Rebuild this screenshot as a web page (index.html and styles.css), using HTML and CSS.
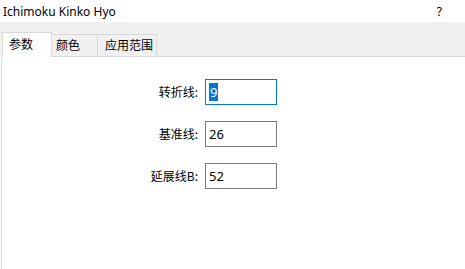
FILE: index.html
```html
<!DOCTYPE html>
<html lang="zh-CN">
<head>
  <meta charset="UTF-8">
  <title>Ichimoku Kinko Hyo</title>
  <link rel="stylesheet" href="styles.css">
</head>
<body>
  <div class="dialog">
    <div class="titlebar">
      <span class="title">Ichimoku Kinko Hyo</span>
      <span class="help">?</span>
    </div>

    <div class="tabstrip">
      <div class="tab active">参数</div>
      <div class="tab">颜色</div>
      <div class="tab last">应用范围</div>
    </div>

    <div class="panel">
      <div class="form">
        <label class="label">转折线:</label>
        <div class="field focused"><span class="sel">9</span></div>

        <label class="label">基准线:</label>
        <div class="field">26</div>

        <label class="label">延展线B:</label>
        <div class="field">52</div>
      </div>
    </div>
  </div>
</body>
</html>
```

FILE: styles.css
```css
body {
  margin: 0;
  background: #fff;
  font-family: "Noto Sans", "Noto Sans CJK SC", sans-serif;
  font-size: 12px;
  color: #000;
}

.dialog {
  width: 465px;
  height: 269px;
  display: flex;
  flex-direction: column;
  overflow: hidden;
}

.titlebar {
  height: 22px;
  display: flex;
  align-items: center;
  justify-content: space-between;
  padding: 0 23px 0 3px;
  font-size: 12px;
}

.help {
  font-size: 12px;
}

.tabstrip {
  height: 34px;
  background: #f0f0f0;
  display: flex;
  align-items: flex-end;
  padding-left: 2px;
}

.tab {
  height: 21px;
  line-height: 20px;
  background: #f0f0f0;
  border: 1px solid #d9d9d9;
  border-bottom: none;
  border-left: none;
  font-family: "Noto Sans CJK SC", sans-serif;
  padding: 0 17px 0 4px;
}

.tab.active {
  height: 24px;
  line-height: 22px;
  background: #fff;
  border-left: 1px solid #d9d9d9;
  padding: 0 18px 0 6px;
  margin-bottom: -1px;
  position: relative;
}

.tab.last {
  padding: 0 3px 0 7px;
}

.panel {
  flex: 1;
  margin-left: 1px;
  background: #fff;
  border-top: 1px solid #d9d9d9;
  border-left: 1px solid #d9d9d9;
  padding-top: 22px;
}

.form {
  display: grid;
  grid-template-columns: 196px 72px;
  grid-auto-rows: 26px;
  column-gap: 7px;
  row-gap: 16px;
}

.label {
  font-family: "Noto Sans CJK SC", sans-serif;
  text-align: right;
  line-height: 26px;
}

.field {
  box-sizing: border-box;
  border: 1px solid #7a7a7a;
  padding: 0 3px;
  font-family: "Noto Sans", sans-serif;
  font-size: 13px;
  line-height: 24px;
}

.field.focused {
  border-color: #0078d7;
}

.sel {
  background: #0078d7;
  color: #fff;
  padding: 0 1px;
}
```
